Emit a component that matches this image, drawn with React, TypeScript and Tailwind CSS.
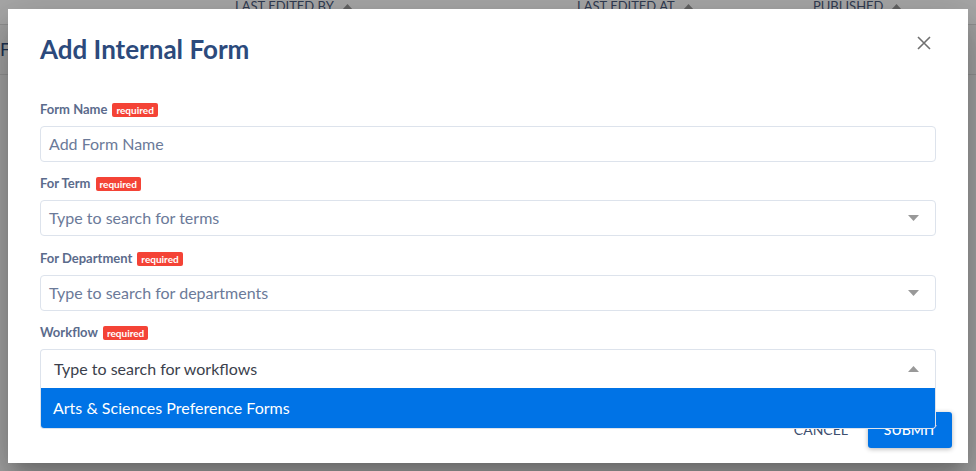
const Caret = ({ up = false }: { up?: boolean }) => (
  <svg width="11" height="6" viewBox="0 0 11 6" className="shrink-0">
    <path d={up ? "M0 6 L5.5 0 L11 6 Z" : "M0 0 L5.5 6 L11 0 Z"} fill="#999999" />
  </svg>
);

const Label = ({ text }: { text: string }) => (
  <div className="flex h-4 items-center gap-[5px]">
    <span className="text-[13px] font-bold text-[#5b6b8c]">{text}</span>
    <span className="rounded-[2px] bg-[#f44336] px-[4px] text-[10px] leading-[14px] font-bold text-white">
      required
    </span>
  </div>
);

const Field = ({
  label,
  placeholder,
  select = false,
  className = "",
}: {
  label: string;
  placeholder: string;
  select?: boolean;
  className?: string;
}) => (
  <div className={"flex flex-col gap-2 " + className}>
    <Label text={label} />
    <div className="flex h-9 items-center justify-between rounded-[4px] border border-[#dde3ec] pr-[16px] pl-[8px]">
      <span className="text-[16px] text-[#6b7a99]">{placeholder}</span>
      {select && <Caret />}
    </div>
  </div>
);

export default function App() {
  return (
    <div className="relative h-[471px] w-full overflow-hidden bg-[#f6f6f6] font-['Lato',sans-serif]">
      {/* page behind the dialog */}
      <div className="flex h-[25px] items-start border-b border-[#dcdcdc] bg-white text-[13px] uppercase text-[#4b5b7d]">
        <div className="w-[235px]" />
        <div className="-mt-[3px] flex w-[342px] items-center gap-2">
          Last Edited By <Caret up />
        </div>
        <div className="-mt-[3px] flex w-[236px] items-center gap-2">
          Last Edited At <Caret up />
        </div>
        <div className="-mt-[3px] flex items-center gap-2">
          Published <Caret up />
        </div>
      </div>
      <div className="flex h-[50px] items-center border-b border-[#dcdcdc] text-[18px] text-[#2c4a7c]">
        Forms
      </div>

      {/* overlay */}
      <div className="absolute inset-0 flex items-center justify-center bg-black/[0.34]">
        <div className="flex h-[454px] w-[960px] flex-col bg-white shadow-[0_11px_15px_-7px_rgba(0,0,0,0.2),0_24px_38px_3px_rgba(0,0,0,0.14),0_9px_46px_8px_rgba(0,0,0,0.12)]">
          <div className="flex items-start justify-between px-8 pt-6">
            <h2 className="text-[26px] leading-[32px] font-bold text-[#2c4a7c]">Add Internal Form</h2>
            <svg width="14" height="14" viewBox="0 0 14 14" className="mt-[3px] mr-[5px]">
              <path d="M1 1 L13 13 M13 1 L1 13" stroke="#707070" strokeWidth="1.6" />
            </svg>
          </div>

          <div className="mt-[37px] flex flex-col gap-[14px] px-8">
            <Field label="Form Name" placeholder="Add Form Name" />
            <Field label="For Term" placeholder="Type to search for terms" select />
            <Field label="For Department" placeholder="Type to search for departments" select className="mt-px" />
            <div className="flex flex-col gap-2">
              <Label text="Workflow" />
              <div className="relative">
                <div className="flex h-[40px] items-center justify-between rounded-t-[4px] border border-b-0 border-[#dde3ec] pr-[16px] pl-[13px]">
                  <span className="text-[16px] text-[#3b3f4c]">Type to search for workflows</span>
                  <Caret up />
                </div>
                <div className="absolute top-[39px] right-0 left-0 z-10 overflow-hidden rounded-b-[4px] border border-t-0 border-[#dde3ec] bg-white">
                  <div className="flex h-[40px] items-center bg-[#0073e6] pl-[12px] text-[16px] text-white">
                    Arts &amp; Sciences Preference Forms
                  </div>
                </div>
              </div>
            </div>
          </div>

          <div className="mt-auto flex items-center justify-end gap-[12px] pr-4 pb-[15px]">
            <button className="px-2 text-[14px] text-[#3d4e6e] uppercase">Cancel</button>
            <button className="h-9 w-[84px] rounded-[3px] bg-[#0073e6] text-[14px] font-medium text-white uppercase shadow-[0_1px_5px_rgba(0,0,0,0.3)]">
              Submit
            </button>
          </div>
        </div>
      </div>
    </div>
  );
}
